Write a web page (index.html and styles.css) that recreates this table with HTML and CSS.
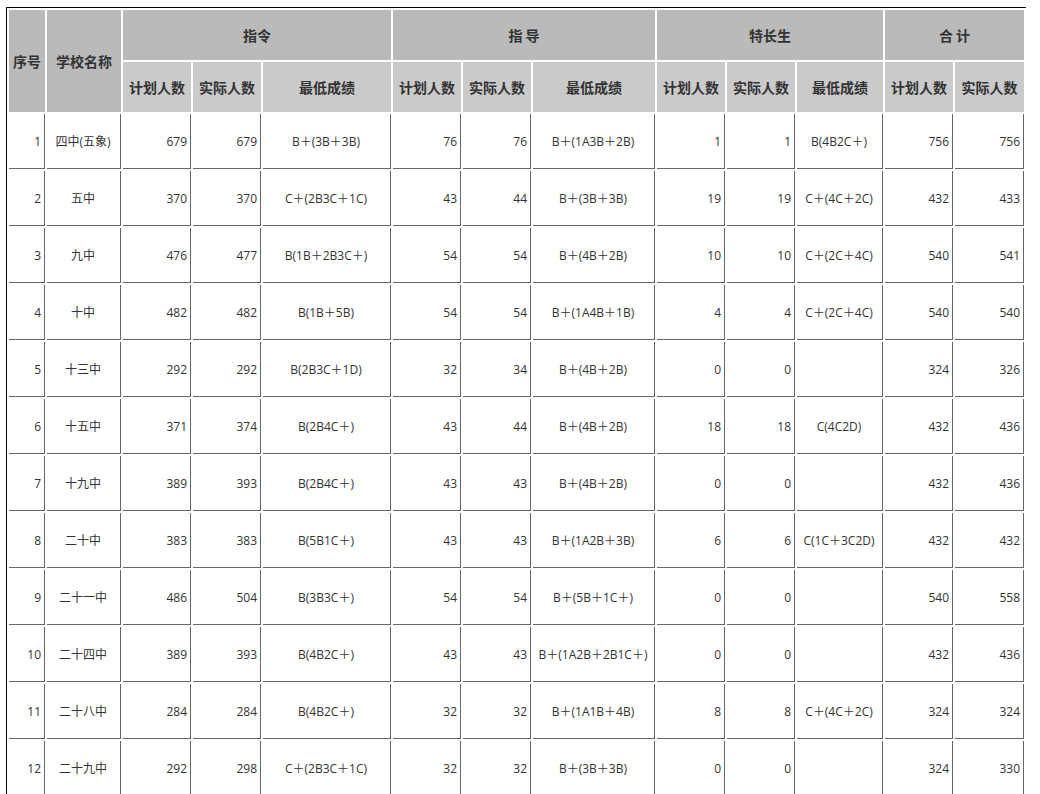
FILE: index.html
```html
<!DOCTYPE html>
<html lang="zh-CN">
<head>
<meta charset="utf-8">
<title>招生计划</title>
<link rel="stylesheet" href="styles.css">
</head>
<body>
<div class="page">
<table class="plan">
  <colgroup>
    <col class="w-no"><col class="w-name">
    <col class="w-num"><col class="w-num"><col class="w-g1">
    <col class="w-num"><col class="w-num"><col class="w-g2">
    <col class="w-num"><col class="w-num"><col class="w-g3">
    <col class="w-num"><col class="w-last">
  </colgroup>
  <thead>
    <tr class="h1">
      <th rowspan="2">序号</th>
      <th rowspan="2">学校名称</th>
      <th colspan="3">指令</th>
      <th colspan="3">指 导</th>
      <th colspan="3">特长生</th>
      <th colspan="2">合 计</th>
    </tr>
    <tr class="h2">
      <th>计划人数</th><th>实际人数</th><th>最低成绩</th>
      <th>计划人数</th><th>实际人数</th><th>最低成绩</th>
      <th>计划人数</th><th>实际人数</th><th>最低成绩</th>
      <th>计划人数</th><th>实际人数</th>
    </tr>
  </thead>
  <tbody>
    <tr><td class="r">1</td><td class="c">四中(五象)</td><td class="r">679</td><td class="r">679</td><td class="c">B＋(3B＋3B)</td><td class="r">76</td><td class="r">76</td><td class="c">B＋(1A3B＋2B)</td><td class="r">1</td><td class="r">1</td><td class="c">B(4B2C＋)</td><td class="r">756</td><td class="r">756</td></tr>
    <tr><td class="r">2</td><td class="c">五中</td><td class="r">370</td><td class="r">370</td><td class="c">C＋(2B3C＋1C)</td><td class="r">43</td><td class="r">44</td><td class="c">B＋(3B＋3B)</td><td class="r">19</td><td class="r">19</td><td class="c">C＋(4C＋2C)</td><td class="r">432</td><td class="r">433</td></tr>
    <tr><td class="r">3</td><td class="c">九中</td><td class="r">476</td><td class="r">477</td><td class="c">B(1B＋2B3C＋)</td><td class="r">54</td><td class="r">54</td><td class="c">B＋(4B＋2B)</td><td class="r">10</td><td class="r">10</td><td class="c">C＋(2C＋4C)</td><td class="r">540</td><td class="r">541</td></tr>
    <tr><td class="r">4</td><td class="c">十中</td><td class="r">482</td><td class="r">482</td><td class="c">B(1B＋5B)</td><td class="r">54</td><td class="r">54</td><td class="c">B＋(1A4B＋1B)</td><td class="r">4</td><td class="r">4</td><td class="c">C＋(2C＋4C)</td><td class="r">540</td><td class="r">540</td></tr>
    <tr><td class="r">5</td><td class="c">十三中</td><td class="r">292</td><td class="r">292</td><td class="c">B(2B3C＋1D)</td><td class="r">32</td><td class="r">34</td><td class="c">B＋(4B＋2B)</td><td class="r">0</td><td class="r">0</td><td class="c"></td><td class="r">324</td><td class="r">326</td></tr>
    <tr><td class="r">6</td><td class="c">十五中</td><td class="r">371</td><td class="r">374</td><td class="c">B(2B4C＋)</td><td class="r">43</td><td class="r">44</td><td class="c">B＋(4B＋2B)</td><td class="r">18</td><td class="r">18</td><td class="c">C(4C2D)</td><td class="r">432</td><td class="r">436</td></tr>
    <tr><td class="r">7</td><td class="c">十九中</td><td class="r">389</td><td class="r">393</td><td class="c">B(2B4C＋)</td><td class="r">43</td><td class="r">43</td><td class="c">B＋(4B＋2B)</td><td class="r">0</td><td class="r">0</td><td class="c"></td><td class="r">432</td><td class="r">436</td></tr>
    <tr><td class="r">8</td><td class="c">二十中</td><td class="r">383</td><td class="r">383</td><td class="c">B(5B1C＋)</td><td class="r">43</td><td class="r">43</td><td class="c">B＋(1A2B＋3B)</td><td class="r">6</td><td class="r">6</td><td class="c">C(1C＋3C2D)</td><td class="r">432</td><td class="r">432</td></tr>
    <tr><td class="r">9</td><td class="c">二十一中</td><td class="r">486</td><td class="r">504</td><td class="c">B(3B3C＋)</td><td class="r">54</td><td class="r">54</td><td class="c">B＋(5B＋1C＋)</td><td class="r">0</td><td class="r">0</td><td class="c"></td><td class="r">540</td><td class="r">558</td></tr>
    <tr><td class="r">10</td><td class="c">二十四中</td><td class="r">389</td><td class="r">393</td><td class="c">B(4B2C＋)</td><td class="r">43</td><td class="r">43</td><td class="c">B＋(1A2B＋2B1C＋)</td><td class="r">0</td><td class="r">0</td><td class="c"></td><td class="r">432</td><td class="r">436</td></tr>
    <tr><td class="r">11</td><td class="c">二十八中</td><td class="r">284</td><td class="r">284</td><td class="c">B(4B2C＋)</td><td class="r">32</td><td class="r">32</td><td class="c">B＋(1A1B＋4B)</td><td class="r">8</td><td class="r">8</td><td class="c">C＋(4C＋2C)</td><td class="r">324</td><td class="r">324</td></tr>
    <tr><td class="r">12</td><td class="c">二十九中</td><td class="r">292</td><td class="r">298</td><td class="c">C＋(2B3C＋1C)</td><td class="r">32</td><td class="r">32</td><td class="c">B＋(3B＋3B)</td><td class="r">0</td><td class="r">0</td><td class="c"></td><td class="r">324</td><td class="r">330</td></tr>
  </tbody>
</table>
</div>
</body>
</html>
```

FILE: styles.css
```css
html, body {
  margin: 0;
  padding: 0;
  background: #fff;
  overflow: hidden;
}

.page {
  padding: 7px 0 0 6px;
}

.plan {
  border-collapse: separate;
  border-spacing: 2px;
  border-top: 1px solid #000;
  border-left: 1px solid #000;
  table-layout: fixed;
  width: 1020px;
  font-family: "Open Sans", "Noto Sans CJK SC", sans-serif;
  color: #333;
}

.w-no { width: 36px; }
.w-name { width: 74px; }
.w-num { width: 68px; }
.w-g1 { width: 128px; }
.w-g2 { width: 122px; }
.w-g3 { width: 86px; }
.w-last { width: 69px; }

.plan th {
  box-sizing: border-box;
  height: 50px;
  padding: 0;
  font-family: "Noto Sans CJK SC", sans-serif;
  font-size: 14px;
  font-weight: bold;
  color: #333;
  text-align: center;
  vertical-align: middle;
  white-space: nowrap;
}

.h1 th { background: #bababa; }
.h2 th { background: #cacaca; }

.plan td {
  box-sizing: border-box;
  height: 55px;
  padding: 0 3px 0 2px;
  font-size: 12px;
  border-right: 1px solid #666;
  border-bottom: 1px solid #666;
  vertical-align: middle;
  white-space: nowrap;
}

.plan td.r { text-align: right; }
.plan td.c { text-align: center; }
```
